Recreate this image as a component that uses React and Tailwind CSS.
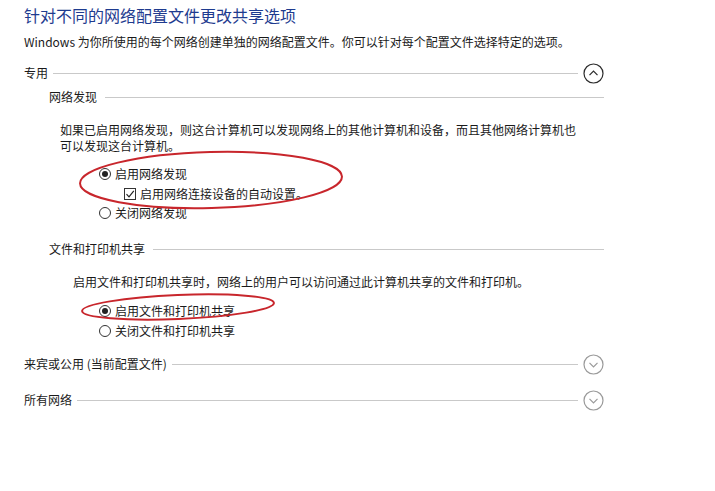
import React from 'react';

const font = { fontFamily: '"Noto Sans CJK SC", "Noto Sans", sans-serif' };

function Chevron({ up, dark }) {
    return (
        <svg width="21" height="21" viewBox="0 0 21 21" className="shrink-0">
            <circle cx="10.5" cy="10.5" r="9.5" fill="none" stroke={dark ? '#2b2b2b' : '#9a9a9a'} strokeWidth="1.2" />
            {up ? (
                <path d="M6.5 12.2 L10.5 8.2 L14.5 12.2" fill="none" stroke={dark ? '#2b2b2b' : '#9a9a9a'} strokeWidth="1.2" />
            ) : (
                <path d="M6.5 8.8 L10.5 12.8 L14.5 8.8" fill="none" stroke="#9a9a9a" strokeWidth="1.2" />
            )}
        </svg>
    );
}

function Radio({ checked, label }) {
    return (
        <div className="flex items-center gap-[4px]">
            <span className="w-[12px] h-[12px] rounded-full border border-[#333] flex items-center justify-center bg-white">
                {checked && <span className="w-[6px] h-[6px] rounded-full bg-[#222]" />}
            </span>
            <span>{label}</span>
        </div>
    );
}

export default function App() {
    return (
        <div className="relative w-[715px] h-[491px] bg-white text-[12px] text-[#1a1a1a] overflow-hidden" style={font}>
            <div className="pl-[24px]">
                <div className="h-[30px] leading-[30px] text-[16px] text-[#1e3b8f]">针对不同的网络配置文件更改共享选项</div>
                <div className="mt-[4px] h-[16px] leading-[16px]">Windows 为你所使用的每个网络创建单独的网络配置文件。你可以针对每个配置文件选择特定的选项。</div>

                {/* 专用 */}
                <div className="mt-[12px] w-[580px] h-[22px] flex items-center gap-[5px]">
                    <span>专用</span>
                    <div className="flex-1 h-px bg-[#c9c9c9]" />
                    <Chevron up dark />
                </div>

                <div className="mt-[3px] pl-[25px] w-[580px] h-[20px] flex items-center gap-[8px]">
                    <span>网络发现</span>
                    <div className="flex-1 h-px bg-[#c9c9c9]" />
                </div>

                <div className="mt-[15px] pl-[36px] leading-[16px]">
                    如果已启用网络发现，则这台计算机可以发现网络上的其他计算机和设备，而且其他网络计算机也<br />
                    可以发现这台计算机。
                </div>

                <div className="mt-[10px] pl-[75px]">
                    <div className="h-[20px] flex items-center"><Radio checked label="启用网络发现" /></div>
                    <div className="h-[19px] pl-[25px] flex items-center gap-[4px]">
                        <span className="w-[12px] h-[12px] border border-[#333] flex items-center justify-center">
                            <svg width="10" height="10" viewBox="0 0 10 10">
                                <path d="M1.5 5.2 L4 7.8 L8.8 1.8" fill="none" stroke="#222" strokeWidth="1.2" />
                            </svg>
                        </span>
                        <span>启用网络连接设备的自动设置。</span>
                    </div>
                    <div className="h-[20px] flex items-center"><Radio label="关闭网络发现" /></div>
                </div>

                <div className="mt-[16px] pl-[25px] w-[580px] h-[20px] flex items-center gap-[8px]">
                    <span>文件和打印机共享</span>
                    <div className="flex-1 h-px bg-[#c9c9c9]" />
                </div>

                <div className="mt-[15px] pl-[49px] h-[16px] leading-[16px]">
                    启用文件和打印机共享时，网络上的用户可以访问通过此计算机共享的文件和打印机。
                </div>

                <div className="mt-[11px] pl-[75px]">
                    <div className="h-[20px] flex items-center"><Radio checked label="启用文件和打印机共享" /></div>
                    <div className="h-[19px] flex items-center"><Radio label="关闭文件和打印机共享" /></div>
                </div>

                <div className="mt-[13px] w-[580px] h-[22px] flex items-center gap-[5px]">
                    <span>来宾或公用 (当前配置文件)</span>
                    <div className="flex-1 h-px bg-[#c9c9c9]" />
                    <Chevron />
                </div>

                <div className="mt-[14px] w-[580px] h-[22px] flex items-center gap-[5px]">
                    <span>所有网络</span>
                    <div className="flex-1 h-px bg-[#c9c9c9]" />
                    <Chevron />
                </div>
            </div>

            {/* 红色标注圈 */}
            <svg className="absolute left-0 top-0 pointer-events-none" width="715" height="491">
                <ellipse cx="211" cy="180" rx="131" ry="28" transform="rotate(-1.5 211 180)" fill="none" stroke="#c8262c" strokeWidth="2" />
                <ellipse cx="178" cy="307" rx="96" ry="12" transform="rotate(-2.4 178 307)" fill="none" stroke="#c8262c" strokeWidth="2" />
            </svg>
        </div>
    );
}
